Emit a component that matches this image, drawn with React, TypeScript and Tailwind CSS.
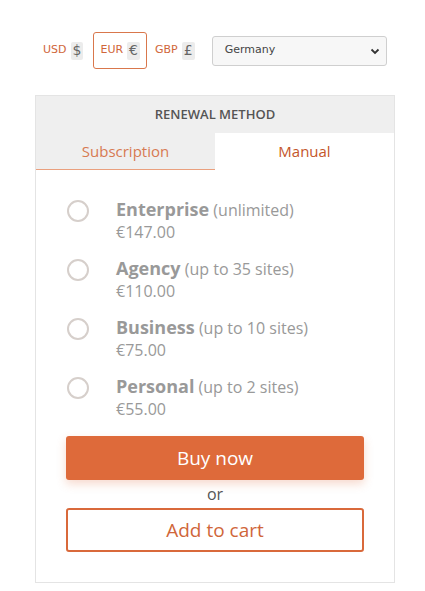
import { useState } from "react";

const plans = [
  { name: "Enterprise", note: "(unlimited)", price: "€147.00" },
  { name: "Agency", note: "(up to 35 sites)", price: "€110.00" },
  { name: "Business", note: "(up to 10 sites)", price: "€75.00" },
  { name: "Personal", note: "(up to 2 sites)", price: "€55.00" },
];

function Currency({ code, sign, active }: { code: string; sign: string; active?: boolean }) {
  return (
    <div
      className={
        "flex items-center gap-[4px] rounded-[3px] " +
        (active ? "h-[37px] border border-[#d9774c] px-[6px]" : "")
      }
    >
      <span className="text-[11px] text-[#d0663a]">{code}</span>
      <span className="flex h-[18px] items-center rounded-[2px] bg-[#ececec] px-[2px] text-[14px] text-[#666]">
        {sign}
      </span>
    </div>
  );
}

export default function App() {
  const [tab, setTab] = useState<"sub" | "manual">("manual");

  return (
    <div className="min-h-[591px] bg-white pt-[32px] font-['Open_Sans',sans-serif]">
      <div className="ml-[43px] flex items-center font-['DejaVu_Sans',sans-serif]">
        <Currency code="USD" sign="$" />
        <div className="ml-[10px]">
          <Currency code="EUR" sign="€" active />
        </div>
        <div className="ml-[8px]">
          <Currency code="GBP" sign="£" />
        </div>
        <div className="ml-[17px] flex h-[30px] w-[175px] items-center justify-between rounded-[3px] border border-[#cfcfcf] bg-[#f7f7f7] pl-[12px] pr-[6px] text-[11px] text-[#444]">
          <span>Germany</span>
          <svg width="10" height="10" viewBox="0 0 10 10">
            <path d="M1.5 3.5 L5 7 L8.5 3.5" fill="none" stroke="#333" strokeWidth="1.8" />
          </svg>
        </div>
      </div>

      <div className="ml-[35px] mt-[26px] w-[360px] border border-[#e4e4e4]">
        <div className="flex h-[37px] items-center justify-center bg-[#efefef] text-[13px] font-semibold text-[#555]">
          RENEWAL METHOD
        </div>
        <div className="flex h-[37px] text-[15px]">
          <button
            onClick={() => setTab("sub")}
            className={
              "flex w-[179px] items-center justify-center " +
              (tab === "sub"
                ? "bg-white text-[#c4562a]"
                : "border-b border-[#eaa07e] bg-[#efefef] text-[#d77a52]")
            }
          >
            Subscription
          </button>
          <button
            onClick={() => setTab("manual")}
            className={
              "flex flex-1 items-center justify-center " +
              (tab === "manual"
                ? "bg-white text-[#c4562a]"
                : "border-b border-[#eaa07e] bg-[#efefef] text-[#d77a52]")
            }
          >
            Manual
          </button>
        </div>

        <div className="px-[30px] pt-[28px] pb-[30px]">
          <div className="flex flex-col gap-[14px]">
            {plans.map((p) => (
              <label key={p.name} className="flex items-start">
                <span className="mt-[2px] ml-[1px] h-[22px] w-[22px] rounded-full border-[2px] border-[#d6cfcb] bg-white" />
                <span className="ml-[27px] flex flex-col leading-[22px] text-[#999]">
                  <span>
                    <span className="text-[18px] font-bold">{p.name}</span>{" "}
                    <span className="text-[16px]">{p.note}</span>
                  </span>
                  <span className="text-[16px]">{p.price}</span>
                </span>
              </label>
            ))}
          </div>

          <button className="mt-[16px] flex h-[44px] w-[298px] items-center justify-center rounded-[3px] bg-[#de6a3a] text-[19px] text-white shadow-[0_4px_10px_rgba(222,106,58,0.25)]">
            Buy now
          </button>
          <div className="my-[4px] text-center text-[16px] leading-[20px] text-[#555]">or</div>
          <button className="flex h-[44px] w-[298px] items-center justify-center rounded-[3px] border-[2px] border-[#d9693b] bg-white text-[19px] text-[#d0663a]">
            Add to cart
          </button>
        </div>
      </div>
    </div>
  );
}
